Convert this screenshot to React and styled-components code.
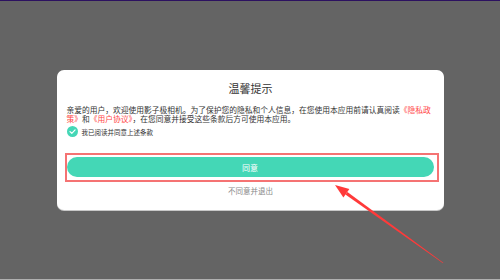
import React from "react";
import styled, { createGlobalStyle } from "styled-components";

const GlobalStyle = createGlobalStyle`
    html, body {
        margin: 0;
        padding: 0;
        background: #646464;
    }
    body {
        font-family: "Noto Sans CJK SC", "Noto Sans", sans-serif;
    }
`;

function CheckIcon() {
    return (
        <svg width="11" height="11" viewBox="0 0 22 22">
            <circle cx="11" cy="11" r="11" fill="#44d7b6" />
            <path
                d="M6 11.2 L9.6 14.6 L16.2 7.8"
                fill="none"
                stroke="#ffffff"
                strokeWidth="2.4"
                strokeLinecap="round"
                strokeLinejoin="round"
            />
        </svg>
    );
}

function Arrow() {
    return (
        <ArrowLayer width="500" height="280" viewBox="0 0 500 280">
            <polygon
                points="345.4,194.5 347.4,191.9 443.3,262.8 443,263.3"
                fill="#ff3a3a"
            />
            <polygon
                points="335,185 343.4,197.4 349.4,189"
                fill="#ff3a3a"
            />
        </ArrowLayer>
    );
}

function App() {
    return (
        <>
            <GlobalStyle />
            <Screen>
                <TopLine />
                <Stage>
                    <Dialog>
                        <Title>温馨提示</Title>
                        <Message>
                            亲爱的用户，欢迎使用影子极相机。为了保护您的隐私和个人信息，在您使用本应用前请认真阅读
                            <Link>《隐私政策》</Link>和<Link>《用户协议》</Link>
                            ，在您同意并接受这些条款后方可使用本应用。
                        </Message>
                        <CheckRow>
                            <CheckIcon />
                            <span>我已阅读并同意上述条款</span>
                        </CheckRow>
                        <Highlight>
                            <AgreeButton>同意</AgreeButton>
                        </Highlight>
                        <Decline>不同意并退出</Decline>
                    </Dialog>
                </Stage>
                <BottomLine />
                <Arrow />
            </Screen>
        </>
    );
}

const Screen = styled.div`
    position: relative;
    width: 500px;
    height: 280px;
    display: flex;
    flex-direction: column;
    background: #646464;
    overflow: hidden;
`;

const TopLine = styled.div`
    height: 1px;
    background: #2c1160;
`;

const BottomLine = styled.div`
    height: 1px;
    background: #b0b0b0;
`;

const Stage = styled.div`
    flex: 1;
    display: flex;
    align-items: center;
    justify-content: center;
`;

const Dialog = styled.div`
    width: 387px;
    box-sizing: border-box;
    padding: 0 9px 14px 10px;
    background: #ffffff;
    border-radius: 7px;
    box-shadow: 0 1px 0 #c8c8c8;
    display: flex;
    flex-direction: column;
`;

const Title = styled.div`
    margin-top: 11px;
    height: 14px;
    line-height: 14px;
    font-size: 11px;
    text-align: center;
    color: #333333;
`;

const Message = styled.p`
    margin: 9.5px 0 0 0;
    font-size: 7.75px;
    line-height: 9px;
    color: #333333;
`;

const Link = styled.span`
    color: #ff4747;
`;

const CheckRow = styled.div`
    margin-top: 3.5px;
    height: 11px;
    display: flex;
    align-items: center;
    gap: 4px;
    font-size: 6.5px;
    color: #333333;
`;

const Highlight = styled.div`
    margin: 16px 0 0 -2px;
    width: 374px;
    height: 29px;
    box-sizing: border-box;
    border: 2px solid #f57373;
    padding: 2px 3px 3px 0;
`;

const AgreeButton = styled.div`
    height: 20px;
    border-radius: 10px;
    background: #44d7b6;
    color: #ffffff;
    font-size: 8px;
    display: flex;
    align-items: center;
    justify-content: center;
`;

const Decline = styled.div`
    margin-top: 4px;
    height: 10px;
    line-height: 10px;
    font-size: 7.5px;
    text-align: center;
    color: #8a8a8a;
`;

const ArrowLayer = styled.svg`
    position: absolute;
    left: 0;
    top: 0;
    pointer-events: none;
`;

export default App;
